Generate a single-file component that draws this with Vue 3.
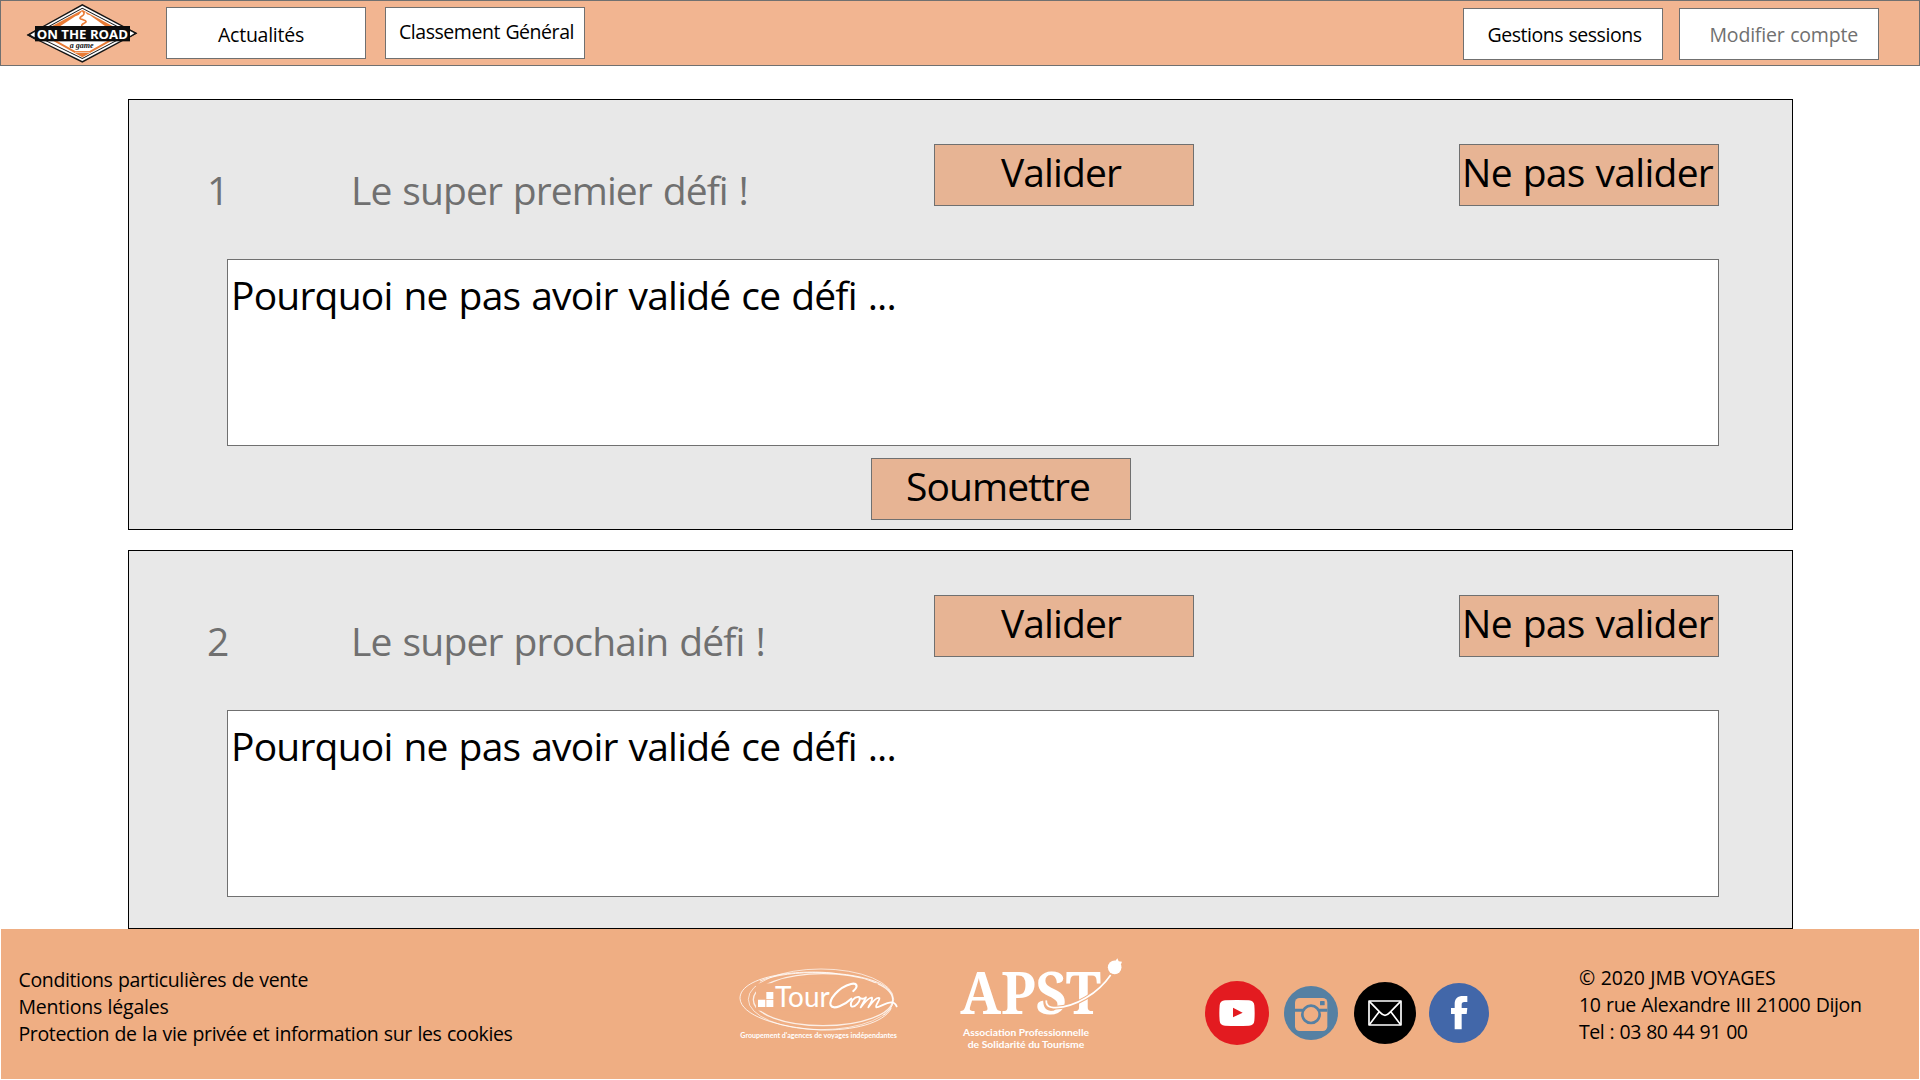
<script setup>
const navLeft = [
  { label: 'Actualités', width: 86, cls: 'nav-news' },
  { label: 'Classement Général', width: 175, cls: 'nav-ranking' },
]
const navRight = [
  { label: 'Gestions sessions', width: 154, cls: 'nav-sessions' },
  { label: 'Modifier compte', width: 148.5, cls: 'nav-account' },
]
const challenges = [
  { id: 1, title: 'Le super premier défi !', width: 397, submit: true },
  { id: 2, title: 'Le super prochain défi !', width: 414, submit: false },
]
const legal = [
  { text: 'Conditions particulières de vente', width: 289.5 },
  { text: 'Mentions légales', width: 150 },
  { text: 'Protection de la vie privée et information sur les cookies', width: 494 },
]
const contact = [
  { text: '© 2020 JMB VOYAGES', width: 196.5 },
  { text: '10 rue Alexandre III 21000 Dijon', width: 282.5 },
  { text: 'Tel : 03 80 44 91 00', width: 168.5 },
]

// Adjusts the tracking so that a label takes exactly the given width
const vFit = {
  mounted(el, { value }) {
    const current = el.getBoundingClientRect().width
    el.style.letterSpacing = `${(value - current) / el.textContent.length}px`
  },
}
</script>

<template>
  <div class="page">
    <header class="topbar">
      <svg class="brand" viewBox="75 9 342 182">
        <path d="M80 105 L247 12 L412 100 L247 188 Z" fill="#151515" />
        <path d="M87 105 L247 17 L404 100 L247 183 Z" fill="#fff" />
        <path d="M98 104 L247 23 L394 100 L247 177 Z" fill="#151515" />
        <path d="M104 104 L247 26 L388 100 L247 174 Z" fill="#fff" />
        <path d="M152 80 L247 30 L342 80 L318 80 L270 46 L261 43 L256 36 L250 40 L246 34 L236 45 L226 49 L178 80 Z" fill="#e97b35" />
        <path d="M249 33 Q257 42 245 49 Q233 56 249 59 Q266 64 252 70 Q243 73 246 80" fill="none" stroke="#e97b35" stroke-width="5" />
        <path d="M160 123 L247 172 L334 123 L322 123 L247 165 L172 123 Z" fill="#e97b35" />
        <path d="M219 153 H273 L247 168 Z" fill="#e97b35" />
        <path d="M225 157 H269" stroke="#fff" stroke-width="2" />
        <path d="M80 105 L108 89 V121 Z M412 100 L386 86 V115 Z" fill="#151515" />
        <path d="M91 104 L104 96 V112 Z M403 100 L390 93 V108 Z" fill="#fff" />
        <rect x="105" y="78" width="285" height="46" fill="#0c0c0c" />
        <text x="110" y="116" class="brand-name" textLength="274" lengthAdjust="spacingAndGlyphs">ON THE ROAD</text>
        <text x="209" y="144" class="brand-sub" textLength="72" lengthAdjust="spacingAndGlyphs">a game</text>
      </svg>
      <nav class="nav">
        <a v-for="n in navLeft" :key="n.label" class="nav-item" :class="n.cls"><span v-fit="n.width">{{ n.label }}</span></a>
      </nav>
      <nav class="nav nav-end">
        <a v-for="n in navRight" :key="n.label" class="nav-item" :class="n.cls"><span v-fit="n.width">{{ n.label }}</span></a>
      </nav>
    </header>

    <main class="list">
      <section v-for="c in challenges" :key="c.id" class="card" :class="{ tall: c.submit }">
        <div class="card-head">
          <span class="num">{{ c.id }}</span>
          <div class="title"><span v-fit="c.width">{{ c.title }}</span></div>
          <div class="btn validate"><span v-fit="120">Valider</span></div>
          <div class="btn reject"><span v-fit="251">Ne pas valider</span></div>
        </div>
        <div class="reason"><span v-fit="665">Pourquoi ne pas avoir validé ce défi ...</span></div>
        <div v-if="c.submit" class="btn submit"><span v-fit="184">Soumettre</span></div>
      </section>
    </main>

    <footer class="footer">
      <div class="legal">
        <p v-for="l in legal" :key="l.text"><span v-fit="l.width">{{ l.text }}</span></p>
      </div>

      <svg class="tourcom" viewBox="54 75 486 231">
        <g fill="none" stroke="#fff" stroke-opacity=".8">
          <ellipse cx="309" cy="179" rx="209" ry="78" stroke-width="4" />
          <ellipse cx="303" cy="178" rx="218" ry="91" stroke-width="2.5" />
          <path d="M350 101 C250 86 60 105 60 175 C62 225 170 262 300 270 C400 272 490 250 514 205" stroke-width="3" />
          <path d="M120 123 C210 85 400 92 480 130 C530 155 530 200 490 226" stroke-width="3" />
        </g>
        <rect x="108" y="130" width="365" height="82" fill="#efae83" />
        <path d="M114 179h22v22h-22z M139 156h21v21h-21z M139 179h21v22h-21z" fill="#fff" />
        <text x="165" y="201" class="tc-name" textLength="164" lengthAdjust="spacingAndGlyphs">Tour</text>
        <g fill="none" stroke="#fff" stroke-linecap="round" stroke-linejoin="round">
          <path d="M400 153 C416 139 411 128 393 132 C355 142 326 179 332 196 C340 211 374 195 394 176" stroke-width="6.5" />
          <path d="M417 171 C403 169 389 187 393 198 C403 206 425 182 417 171 Q424 180 435 174 M438 172 L422 202 C436 184 448 171 456 173 C459 178 449 194 445 202 C458 184 471 171 478 174 C481 180 464 197 469 202 C479 202 497 187 514 187 Q525 187 530 199" stroke-width="5.5" />
        </g>
        <text x="61" y="293" class="tc-sub" textLength="470" lengthAdjust="spacingAndGlyphs">Groupement d'agences de voyages indépendantes</text>
      </svg>

      <svg class="apst" viewBox="54 50 498 285">
        <text x="61" y="222" class="apst-name" textLength="422" lengthAdjust="spacingAndGlyphs">APST</text>
        <path d="M319 180 C317 196 327 202 348 202 C405 200 474 160 512 104" fill="none" stroke="#efae83" stroke-width="11" />
        <path d="M319 180 C317 196 327 202 348 202 C405 200 474 160 512 104" fill="none" stroke="#fff" stroke-width="5" />
        <circle cx="524" cy="81" r="20.5" fill="#fff" />
        <path d="M526 62 L532 54 L536 63 L546 64 L542 74 Z" fill="#fff" />
        <text x="69" y="288" class="apst-sub" textLength="378" lengthAdjust="spacingAndGlyphs">Association Professionnelle</text>
        <text x="83" y="323" class="apst-sub" textLength="350" lengthAdjust="spacingAndGlyphs">de Solidarité du Tourisme</text>
      </svg>

      <div class="social">
        <svg width="64" height="64" viewBox="0 0 192 192">
          <circle cx="96" cy="96" r="96" fill="#e31b20" />
          <path d="M60 58 Q96 56 132 58 Q147 59 148 73 Q150 96 148 119 Q147 133 132 134 Q96 136 60 134 Q45 133 44 119 Q42 96 44 73 Q45 59 60 58 Z" fill="#fff" />
          <path d="M84 80 L113 95 L84 109 Z" fill="#e31b20" />
        </svg>
        <svg class="insta" width="54" height="54" viewBox="0 0 162 162">
          <circle cx="81" cy="81" r="81" fill="#5580a3" />
          <rect x="33" y="36" width="97" height="99" rx="14" fill="#efae83" />
          <path d="M33 73 H130" stroke="#5580a3" stroke-width="9" />
          <circle cx="81" cy="85" r="26" fill="#efae83" stroke="#5580a3" stroke-width="8" />
          <rect x="108" y="45" width="14" height="13" rx="2" fill="#5580a3" />
        </svg>
        <svg class="mail" width="62" height="62" viewBox="0 0 186 186">
          <circle cx="93" cy="93" r="93" fill="#000" />
          <g fill="none" stroke="#fff" stroke-width="5" stroke-linejoin="round">
            <rect x="45" y="57" width="96" height="72" />
            <path d="M46 58 L79 92 Q93 108 107 92 L140 58 M46 128 L75 90 M140 128 L111 90" />
          </g>
        </svg>
        <svg class="fb" width="60" height="60" viewBox="0 0 180 180">
          <circle cx="90" cy="90" r="90" fill="#4267a9" />
          <path d="M77 139 V93 H66 V75 H77 V63 C77 47 86 39 102 39 H115 V57 H106 C100 57 98 60 98 65 V75 H115 L113 93 H98 V139 Z" fill="#fff" />
        </svg>
      </div>

      <div class="contact">
        <p v-for="l in contact" :key="l.text"><span v-fit="l.width">{{ l.text }}</span></p>
      </div>
    </footer>
  </div>
</template>

<style>
body {
  margin: 0;
  background: #fff;
  overflow: hidden;
}
</style>

<style scoped>
.page {
  width: 1920px;
  height: 1080px;
  overflow: hidden;
  font-family: "Open Sans", "Noto Sans", sans-serif;
  font-size: 19.5px;
  line-height: 27px;
  word-spacing: 0.04em;
  color: #000;
  white-space: nowrap;
}
.page *,
.page {
  box-sizing: border-box;
}
.page svg {
  display: block;
  flex: none;
  overflow: visible;
  word-spacing: 0;
}
.page span {
  display: inline-block;
}
.topbar {
  display: flex;
  height: 66px;
  border: 1px solid #707070;
  background: #f2b591;
}
.brand {
  width: 114px;
  height: 60.7px;
  margin: 2px 0 0 24px;
}
.nav {
  display: flex;
  gap: 19px;
  margin: 6px 0 0 27px;
}
.nav-end {
  gap: 16px;
  margin: 7px 40px 0 auto;
}
.nav-item {
  width: 200px;
  height: 52px;
  border: 1px solid #707070;
  background: #fff;
}
.nav-news { padding: 13px 0 0 51px; }
.nav-ranking { padding: 10px 0 0 13px; }
.nav-sessions { padding: 12px 0 0 23.5px; }
.nav-account {
  padding: 12px 0 0 29.5px;
  color: #707070;
}
.list {
  display: flex;
  flex-direction: column;
  gap: 20px;
  width: 1665px;
  margin: 33px 0 0 128px;
  font-size: 39px;
  line-height: 54px;
  word-spacing: 0.04em;
}
.card {
  height: 379px;
  border: 1px solid #000;
  background: #e8e8e8;
}
.card.tall {
  height: 431px;
}
.card-head {
  display: flex;
  height: 159px;
}
.num {
  width: 143px;
  margin: 63px 0 0 78px;
  color: #707070;
}
.title {
  width: 584px;
  margin-top: 63px;
  padding-left: 1px;
  color: #707070;
}
.btn {
  width: 260px;
  height: 62px;
  border: 1px solid #707070;
  background: #e7b494;
}
.validate {
  margin-top: 44px;
  padding-left: 66px;
}
.reject {
  margin: 44px 0 0 265px;
  padding-left: 2px;
}
.reason {
  width: 1492px;
  height: 187px;
  margin-left: 98px;
  padding: 8px 0 0 3px;
  border: 1px solid #707070;
  background: #fff;
}
.submit {
  margin: 12px 0 0 742px;
  padding-left: 34px;
}
.footer {
  display: flex;
  width: 1918px;
  height: 150px;
  margin-left: 1px;
  background: #efae83;
}
.footer p {
  height: 27px;
  margin: 0;
}
.legal {
  width: 719px;
  padding: 37px 0 0 17.5px;
}
.tourcom {
  width: 162px;
  height: 77px;
  margin: 36px 0 0 18px;
}
.apst {
  width: 166px;
  height: 95px;
  margin: 28px 0 0 58px;
}
.social {
  display: flex;
  align-items: center;
  height: 64px;
  margin: 52px 0 0 81px;
}
.insta { margin-left: 15px; }
.mail { margin-left: 16px; }
.fb { margin-left: 13px; }
.contact {
  margin-left: 90px;
  padding-top: 35px;
}
.brand-name {
  font: 700 39px "Open Sans", sans-serif;
  fill: #fff;
}
.brand-sub {
  font: italic 700 27px "Liberation Serif", serif;
  fill: #151515;
}
.tc-name {
  font: 400 87px Lato, sans-serif;
  fill: #fff;
}
.tc-sub {
  font: 700 20px Lato, sans-serif;
  fill: #fff;
}
.apst-name {
  font: 700 176px "Noto Serif", "DejaVu Serif", serif;
  fill: #fff;
}
.apst-sub {
  font: 700 28px Lato, sans-serif;
  fill: #fff;
}
</style>
